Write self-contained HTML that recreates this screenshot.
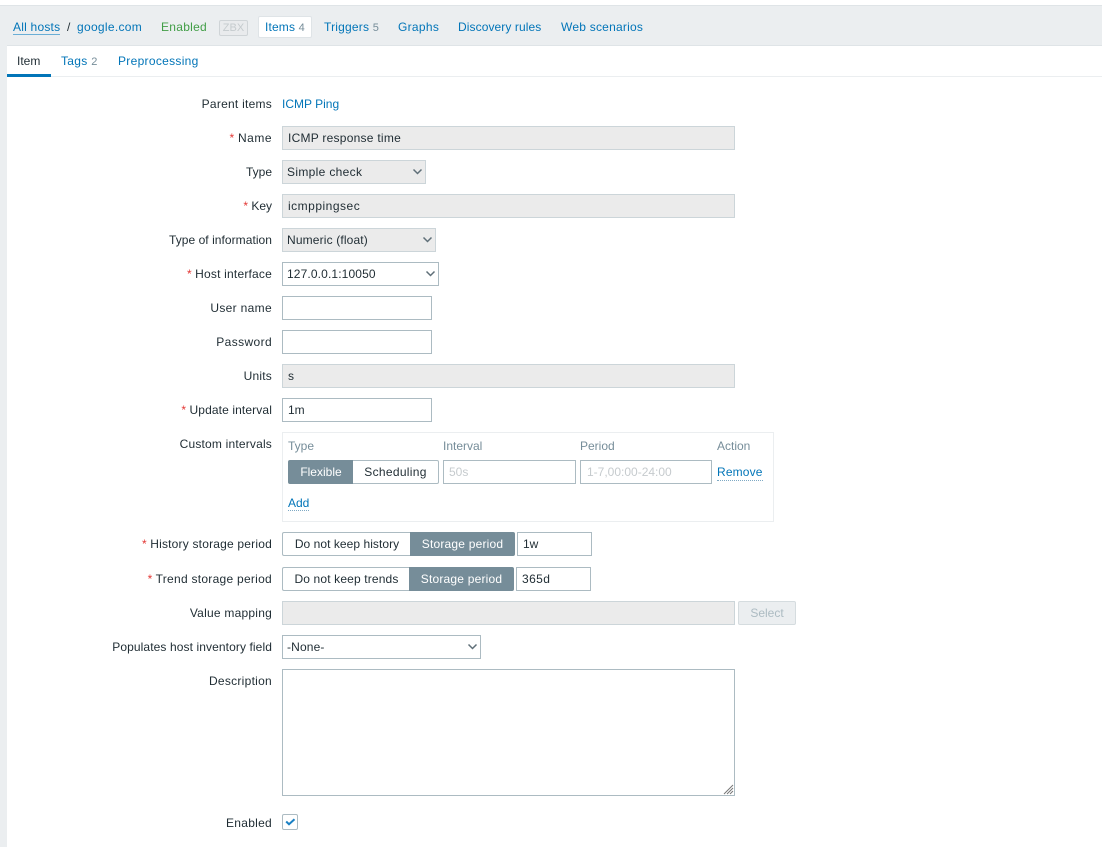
<!DOCTYPE html>
<html><head><meta charset="utf-8"><style>
html,body{margin:0;padding:0;background:#fff}
#p{position:relative;width:1102px;height:847px;overflow:hidden;background:#fff;font:12px/14px "Liberation Sans",Arial,sans-serif;color:#1f2c33}
#p div{position:absolute;white-space:nowrap;box-sizing:border-box}
.l{right:830px;text-align:right}
.l i{color:#e33734;font-style:normal;letter-spacing:0}
.a{color:#0275b8}
.f{border:1px solid #acbbc2;height:24px;padding:4px 4px;background:#fff}
.d{background:#ebebeb;border-color:#ccd5d9}
.s{background:#768d99;color:#fff;text-align:center;border:1px solid #768d99;height:24px;padding-top:4px}
.w{background:#fff;text-align:center;border:1px solid #acbbc2;height:24px;padding-top:4px}
.g{color:#768d99}
svg{position:absolute}
</style></head><body><div id="p">
<div style="left:0;top:5px;width:1102px;height:842px;background:#ebeef0;border-top:1px solid #dfe4e7"></div>
<div style="left:7px;top:45px;width:1095px;height:802px;background:#fff;border-top:1px solid #dfe4e7"></div>

<div class="a" style="left:13px;top:20px;border-bottom:1px solid #6aaed6;height:15px;letter-spacing:.22px">All hosts</div>
<div style="left:67px;top:20px">/</div>
<div class="a" style="left:77px;top:20px;letter-spacing:.3px">google.com</div>
<div style="left:161px;top:20px;color:#429e47;letter-spacing:.28px">Enabled</div>
<div style="left:219px;top:20px;width:29px;height:16px;border:1px solid #cfd4d7;border-radius:2px;color:#c5cbce;font-size:11px;line-height:14px;text-align:center;background:#e9ebed">ZBX</div>
<div style="left:258px;top:16px;width:54px;height:22px;background:#fff;border:1px solid #dfe4e7;border-radius:2px"></div>
<div class="a" style="left:265px;top:20px;letter-spacing:.15px">Items <span style="color:#768d99;font-size:11px">4</span></div>
<div class="a" style="left:324px;top:20px;letter-spacing:.2px">Triggers <span style="color:#768d99;font-size:11px">5</span></div>
<div class="a" style="left:398px;top:20px;letter-spacing:.3px">Graphs</div>
<div class="a" style="left:458px;top:20px;letter-spacing:.09px">Discovery rules</div>
<div class="a" style="left:561px;top:20px;letter-spacing:.23px">Web scenarios</div>

<div style="left:17px;top:54px">Item</div>
<div class="a" style="left:61px;top:54px;letter-spacing:.3px">Tags <span style="color:#768d99;font-size:11px">2</span></div>
<div class="a" style="left:118px;top:54px;letter-spacing:.3px">Preprocessing</div>
<div style="left:7px;top:76px;width:1095px;height:1px;background:#ebeef0"></div>
<div style="left:7px;top:74px;width:44px;height:3px;background:#0275b8"></div>

<div class="l" style="top:97px;letter-spacing:.25px">Parent items</div>
<div class="a" style="left:282px;top:97px">ICMP Ping</div>

<div class="l" style="top:131px;letter-spacing:.5px"><i>*</i> Name</div>
<div class="f d" style="left:282px;top:126px;width:453px;padding-left:5px;letter-spacing:.25px">ICMP response time</div>

<div class="l" style="top:165px">Type</div>
<div class="f d" style="left:282px;top:160px;width:144px;letter-spacing:.33px">Simple check</div>
<svg style="left:412px;top:168px" width="11" height="7"><path d="M1.5 1.5l4 4 4-4" fill="none" stroke="#5f6f78" stroke-width="1.5"/></svg>

<div class="l" style="top:199px"><i>*</i> Key</div>
<div class="f d" style="left:282px;top:194px;width:453px;padding-left:5px;letter-spacing:.5px">icmppingsec</div>

<div class="l" style="top:233px;letter-spacing:.05px">Type of information</div>
<div class="f d" style="left:282px;top:228px;width:154px;letter-spacing:.15px">Numeric (float)</div>
<svg style="left:422px;top:236px" width="11" height="7"><path d="M1.5 1.5l4 4 4-4" fill="none" stroke="#5f6f78" stroke-width="1.5"/></svg>

<div class="l" style="top:267px;letter-spacing:.2px"><i>*</i> Host interface</div>
<div class="f" style="left:282px;top:262px;width:157px;letter-spacing:.13px">127.0.0.1:10050</div>
<svg style="left:425px;top:270px" width="11" height="7"><path d="M1.5 1.5l4 4 4-4" fill="none" stroke="#5f6f78" stroke-width="1.5"/></svg>

<div class="l" style="top:301px;letter-spacing:.33px">User name</div>
<div class="f" style="left:282px;top:296px;width:150px"></div>
<div class="l" style="top:335px;letter-spacing:.38px">Password</div>
<div class="f" style="left:282px;top:330px;width:150px"></div>

<div class="l" style="top:369px;letter-spacing:.2px">Units</div>
<div class="f d" style="left:282px;top:364px;width:453px;padding-left:5px">s</div>

<div class="l" style="top:403px;letter-spacing:.12px"><i>*</i> Update interval</div>
<div class="f" style="left:282px;top:398px;width:150px;padding-left:5px">1m</div>

<div class="l" style="top:437px;letter-spacing:.19px">Custom intervals</div>
<div style="left:282px;top:432px;width:492px;height:90px;border:1px solid #ebeef0"></div>
<div class="g" style="left:288px;top:439px">Type</div>
<div class="g" style="left:443px;top:439px">Interval</div>
<div class="g" style="left:580px;top:439px">Period</div>
<div class="g" style="left:717px;top:439px">Action</div>
<div class="s" style="left:288px;top:460px;width:66px;border-radius:2px 0 0 2px">Flexible</div>
<div class="w" style="left:353px;top:460px;width:86px;border-left:0;border-radius:0 2px 2px 0;letter-spacing:.3px">Scheduling</div>
<div class="f" style="left:443px;top:460px;width:133px;color:#c6cbce;padding-left:5px">50s</div>
<div class="f" style="left:580px;top:460px;width:132px;color:#c6cbce;padding-left:6px">1-7,00:00-24:00</div>
<div class="a" style="left:717px;top:465px;height:16px;border-bottom:1px dotted #7fa9c4;letter-spacing:.15px">Remove</div>
<div class="a" style="left:288px;top:496px;height:15px;border-bottom:1px dotted #7fa9c4">Add</div>

<div class="l" style="top:537px;letter-spacing:.2px"><i>*</i> History storage period</div>
<div class="w" style="left:282px;top:532px;width:129px;border-right:0;border-radius:2px 0 0 2px;letter-spacing:.05px">Do not keep history</div>
<div class="s" style="left:410px;top:532px;width:105px;border-radius:0 2px 2px 0;letter-spacing:.2px">Storage period</div>
<div class="f" style="left:517px;top:532px;width:75px;padding-left:5px">1w</div>

<div class="l" style="top:572px;letter-spacing:.27px"><i>*</i> Trend storage period</div>
<div class="w" style="left:282px;top:567px;width:128px;border-right:0;border-radius:2px 0 0 2px;letter-spacing:.15px">Do not keep trends</div>
<div class="s" style="left:409px;top:567px;width:105px;border-radius:0 2px 2px 0;letter-spacing:.2px">Storage period</div>
<div class="f" style="left:516px;top:567px;width:75px;padding-left:5px;letter-spacing:.4px">365d</div>

<div class="l" style="top:606px;letter-spacing:.23px">Value mapping</div>
<div class="f d" style="left:282px;top:601px;width:453px"></div>
<div style="left:738px;top:601px;width:58px;height:24px;background:#ebeef0;border:1px solid #d5dcdf;border-radius:2px;color:#acbbc2;text-align:center;padding-top:4px">Select</div>

<div class="l" style="top:640px;letter-spacing:.1px">Populates host inventory field</div>
<div class="f" style="left:282px;top:635px;width:199px;letter-spacing:.15px">-None-</div>
<svg style="left:467px;top:643px" width="11" height="7"><path d="M1.5 1.5l4 4 4-4" fill="none" stroke="#5f6f78" stroke-width="1.5"/></svg>

<div class="l" style="top:674px;letter-spacing:.27px">Description</div>
<div style="left:282px;top:669px;width:453px;height:127px;border:1px solid #acbbc2;background:#fff"></div>
<svg style="left:723px;top:784px" width="11" height="11"><path d="M10 1L1 10M10 4L4 10M10 7L7 10" stroke="#777" stroke-width="1" fill="none"/></svg>

<div class="l" style="top:816px;letter-spacing:.28px">Enabled</div>
<div style="left:282px;top:814px;width:16px;height:16px;border:1px solid #acbbc2;border-radius:2px;background:#fff"></div>
<svg style="left:282px;top:814px" width="16" height="16"><path d="M4.2 7.5l2.8 2.7 5.5-5" fill="none" stroke="#1a80c4" stroke-width="2"/></svg>
</div></body></html>
